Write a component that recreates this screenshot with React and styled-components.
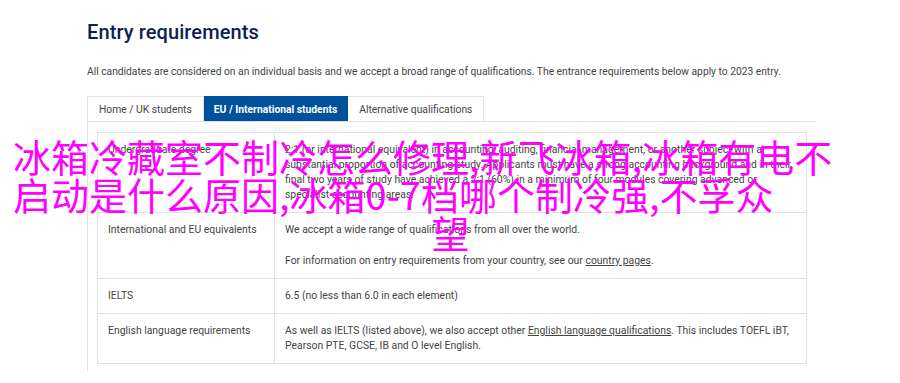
import React from 'react'
import styled, { createGlobalStyle } from 'styled-components'

const GlobalStyle = createGlobalStyle`
  html, body {
    margin: 0;
    padding: 0;
    background: #fff;
  }
  body {
    font-family: Roboto, "Liberation Sans", Arial, sans-serif;
  }
`

const Page = styled.div`
  position: relative;
  width: 900px;
  height: 383px;
  overflow: hidden;
  box-sizing: border-box;
  padding: 19px 84px 0 87px;
`

const Heading = styled.h1`
  margin: 0;
  font-size: 20px;
  line-height: 26px;
  font-weight: 500;
  color: #101c5a;
  letter-spacing: 0.1px;
`

const Intro = styled.p`
  margin: 19px 0 0;
  font-size: 10.25px;
  line-height: 15px;
  color: #444;
`

const Tabs = styled.div`
  display: flex;
  margin-top: 17px;
`

const Tab = styled.div`
  height: 25px;
  box-sizing: border-box;
  padding: 0 ${p => (p.$active ? 10 : 11)}px;
  display: flex;
  align-items: center;
  font-size: 10.3px;
  white-space: nowrap;
  color: ${p => (p.$active ? '#fff' : '#444')};
  background: ${p => (p.$active ? '#00519b' : '#fff')};
  font-weight: ${p => (p.$active ? 700 : 400)};
  border: 1px solid ${p => (p.$active ? '#00519b' : '#e2e2e2')};
  border-bottom: none;
  border-left: ${p => (p.$first ? '1px solid #e2e2e2' : 'none')};
`

const Panel = styled.div`
  border-top: 1px solid #e2e2e2;
  border-left: 1px solid #e2e2e2;
  padding: 10px 9px 7px 9px;
`

const Table = styled.table`
  width: 100%;
  border-collapse: collapse;
  font-size: 10.4px;
  line-height: 15px;
  color: #444;
`

const Cell = styled.td`
  border: 1px solid #e2e2e2;
  vertical-align: top;
  padding: 9px 10px 10px;
  width: ${p => p.$w || 'auto'};
`

const Para = styled.p`
  margin: ${p => (p.$gap ? '16px 0 0' : '0')};
`

const Link = styled.a`
  color: #444;
  text-decoration: underline;
  text-underline-offset: 1px;
`

const Overlay = styled.div`
  position: absolute;
  left: 13px;
  top: 137px;
  width: 875px;
  font-family: "Noto Sans CJK SC", "Noto Sans", sans-serif;
  font-size: 38px;
  line-height: 38px;
  color: #ff00ff;
  white-space: nowrap;
  pointer-events: none;
`

const OverlayLine = styled.div`
  text-align: ${p => (p.$center ? 'center' : 'left')};
`

const rows = [
  {
    label: 'Undergraduate degree',
    content: [
      <Para key="a">
        2:1 (or international equivalent) in accounting, auditing, financial management, or another subject with a
        substantial proportion of accounting study. Applicants must have a strong accounting background and in their
        final two years of study have achieved a 2:1 (60%) in a minimum of four modules covering advanced or specialist
        accounting areas.
      </Para>
    ]
  },
  {
    label: 'International and EU equivalents',
    content: [
      <Para key="a">We accept a wide range of qualifications from all over the world.</Para>,
      <Para key="b" $gap>
        For information on entry requirements from your country, see our <Link href="#">country pages</Link>.
      </Para>
    ]
  },
  {
    label: 'IELTS',
    content: [<Para key="a">6.5 (no less than 6.0 in each element)</Para>]
  },
  {
    label: 'English language requirements',
    content: [
      <Para key="a">
        As well as IELTS (listed above), we also accept other <Link href="#">English language qualifications</Link>.
        This includes TOEFL iBT, Pearson PTE, GCSE, IB and O level English.
      </Para>
    ]
  }
]

export default function App() {
  return (
    <Page>
      <GlobalStyle />
      <Heading>Entry requirements</Heading>
      <Intro>
        All candidates are considered on an individual basis and we accept a broad range of qualifications. The entrance
        requirements below apply to 2023 entry.
      </Intro>
      <Tabs>
        <Tab $first>Home / UK students</Tab>
        <Tab $active>EU / International students</Tab>
        <Tab>Alternative qualifications</Tab>
      </Tabs>
      <Panel>
        <Table>
          <tbody>
            {rows.map(r => (
              <tr key={r.label}>
                <Cell $w="156px">{r.label}</Cell>
                <Cell>{r.content}</Cell>
              </tr>
            ))}
          </tbody>
        </Table>
      </Panel>
      <Overlay>
        <OverlayLine>冰箱冷藏室不制冷怎么修理,新飞冰箱,冰箱有电不</OverlayLine>
        <OverlayLine>启动是什么原因,冰箱0-7档哪个制冷强,不孚众</OverlayLine>
        <OverlayLine $center>望</OverlayLine>
      </Overlay>
    </Page>
  )
}
